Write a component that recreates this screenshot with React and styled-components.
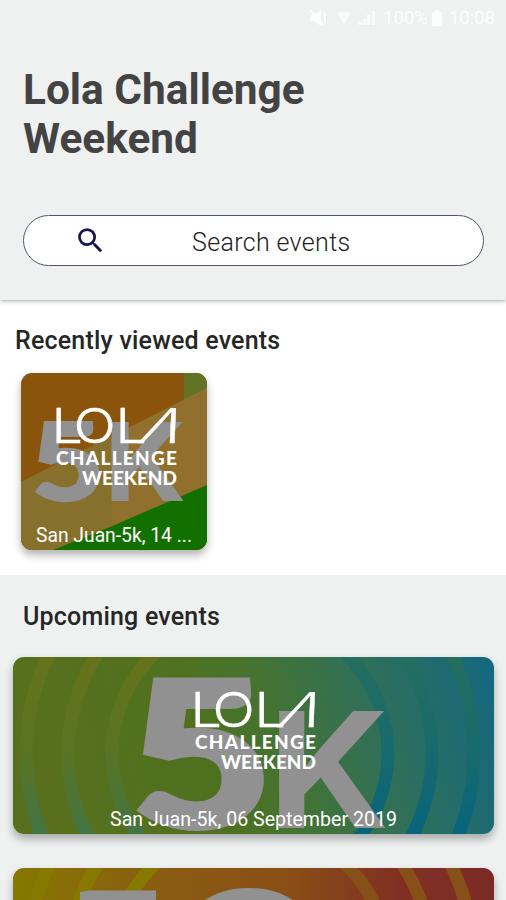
import styled, { createGlobalStyle } from "styled-components";

const GlobalStyle = createGlobalStyle`
  * {
    box-sizing: border-box;
  }

  body {
    margin: 0;
    background-color: #eff1f1;
    font-family: Roboto, "Liberation Sans", sans-serif;
  }
`;

const Screen = styled.main`
  display: flex;
  flex-direction: column;
  height: 900px;
  overflow: hidden;
`;

const Header = styled.header`
  flex: none;
  height: 300px;
  background-color: #eff1f1;
  box-shadow: 0 1px 4px rgba(0, 0, 0, 0.35);
  z-index: 1;
`;

const StatusBar = styled.div`
  display: flex;
  align-items: center;
  justify-content: flex-end;
  height: 36px;
  padding-right: 11px;
  color: #fdfdfd;
  font-size: 18.5px;
`;

const StatusIcon = styled.svg`
  width: ${(props) => props.$w}px;
  height: 18px;
  margin-right: ${(props) => props.$gap}px;
  fill: #fdfdfd;
`;

const Percent = styled.span`
  margin-right: 3px;
`;

const Title = styled.h1`
  margin: 29px 23px 0;
  width: 340px;
  color: #434343;
  font-size: 42.4px;
  font-weight: 700;
  line-height: 49px;
`;

const SearchBox = styled.button`
  display: flex;
  align-items: center;
  width: 461px;
  height: 51px;
  margin: 52px 0 0 23px;
  padding: 0 0 0 50px;
  border: 1px solid #55556a;
  border-radius: 26px;
  background-color: #fff;
  color: #222;
  font-family: inherit;
  font-size: 25px;
`;

const SearchIcon = styled.svg`
  width: 33px;
  height: 33px;
  fill: #17134d;
`;

const SearchLabel = styled.span`
  margin: 4px 0 0 85px;
  font-weight: 300;
  letter-spacing: 0.35px;
`;

const Recent = styled.section`
  flex: none;
  height: 275px;
  padding: 26px 0 0 15px;
  background-color: #fff;
`;

const Upcoming = styled.section`
  padding: 27px 12px 0 13px;
`;

const Heading = styled.h2`
  margin: 0 0 0 ${(props) => props.$indent || 0}px;
  color: #262626;
  font-size: 25px;
  font-weight: 500;
  letter-spacing: 0.2px;
  line-height: 30px;
`;

const Card = styled.article`
  display: grid;
  width: ${(props) => props.$w}px;
  height: 177px;
  margin: ${(props) => props.$margin};
  border-radius: 11px;
  overflow: hidden;
  box-shadow: 0 5px 8px rgba(0, 0, 0, 0.3);

  > * {
    grid-area: 1 / 1;
  }
`;

const Art = styled.svg`
  display: block;
  width: 100%;
  height: 177px;
`;

const Caption = styled.p`
  align-self: end;
  margin: 0 0 2px;
  color: #fff;
  font-size: ${(props) => props.$size || 19.6}px;
  line-height: 24px;
  text-align: center;
  white-space: nowrap;
`;

const Big = styled.text`
  fill: #919191;
  font-family: Inter, sans-serif;
  font-weight: ${(props) => props.$weight || 700};
`;

const Five = styled.text`
  fill: #919191;
  stroke: #919191;
  font-family: Lato, sans-serif;
  font-weight: 900;
`;

const Thin = styled.text`
  fill: #fff;
  stroke: #fff;
  stroke-width: 0.4px;
  font-family: Inter, sans-serif;
  font-size: 48px;
  font-weight: 300;
`;

const Bold = styled.text`
  fill: #fff;
  font-family: Lato, sans-serif;
  font-size: 19px;
  font-weight: 900;
`;

const Logo = ({ x, y }) => (
  <g transform={`translate(${x} ${y})`}>
    <Thin transform="translate(-4.6 35) scale(1.16 1)">L</Thin>
    <Thin transform="translate(17.5 35) scale(1.16 1)">O</Thin>
    <Thin transform="translate(59.4 35) scale(1.16 1)">L</Thin>
    <Thin transform="translate(80.5 35) scale(1.22 1) skewX(-22)">Λ</Thin>
    <Bold x="0" y="57" textLength="121">CHALLENGE</Bold>
    <Bold x="26" y="77" textLength="95">WEEKEND</Bold>
  </g>
);

const Rings = ({ left, right }) => (
  <g fill="none" strokeWidth="13">
    {[138, 182, 224].map((r) => (
      <g key={r}>
        <path d={`M237 ${96 - r}A${r} ${r} 0 0 0 237 ${96 + r}`} stroke={left} />
        <path d={`M237 ${96 - r}A${r} ${r} 0 0 1 237 ${96 + r}`} stroke={right} />
      </g>
    ))}
  </g>
);

const RecentArt = () => (
  <Art viewBox="0 0 186 177">
    <path d="M0 0H186V177H0Z" fill="#8b540d" />
    <path d="M163 0H186V40H163Z" fill="#627326" />
    <path d="M0 109L186 15V177H0Z" fill="#90702c" />
    <path d="M0 109L91 63V177H0Z" fill="#86702c" />
    <path d="M32 177L89 154L186 112V177Z" fill="#127000" />
    <Five fontSize="107" strokeWidth="3" transform="translate(12 127) scale(1.17 1) skewX(3)">5</Five>
    <Big fontSize="109" transform="translate(83 128) scale(1.05 1)">K</Big>
    <Logo x={35} y={35} />
  </Art>
);

const GreenArt = () => (
  <Art viewBox="0 0 481 177">
    <defs>
      <linearGradient id="green" x2="1" y2="-0.1">
        <stop offset="0" stopColor="#58701e" />
        <stop offset="0.35" stopColor="#4e711f" />
        <stop offset="0.5" stopColor="#447332" />
        <stop offset="0.7" stopColor="#317057" />
        <stop offset="1" stopColor="#136782" />
      </linearGradient>
      <linearGradient id="ringLeft" gradientUnits="userSpaceOnUse" x1="0" y1="0" x2="0" y2="177">
        <stop offset="0" stopColor="#66731b" />
        <stop offset="0.55" stopColor="#587423" />
        <stop offset="1" stopColor="#427445" />
      </linearGradient>
      <linearGradient id="ringRight" gradientUnits="userSpaceOnUse" x1="0" y1="0" x2="0" y2="177">
        <stop offset="0" stopColor="#256e5f" />
        <stop offset="0.5" stopColor="#186a6c" />
        <stop offset="1" stopColor="#08647c" />
      </linearGradient>
    </defs>
    <path d="M0 0H481V177H0Z" fill="url(#green)" />
    <Rings left="url(#ringLeft)" right="url(#ringRight)" />
    <Five fontSize="200" strokeWidth="7" transform="translate(121 169) scale(1.22 1) skewX(3.5)">5</Five>
    <Big fontSize="161" transform="translate(255 171) scale(1.05 1)">K</Big>
    <Logo x={182} y={35} />
  </Art>
);

const RedArt = () => (
  <Art viewBox="0 0 481 177">
    <defs>
      <linearGradient id="red">
        <stop offset="0" stopColor="#857800" />
        <stop offset="0.3" stopColor="#8a5c12" />
        <stop offset="0.58" stopColor="#894e16" />
        <stop offset="0.8" stopColor="#803022" />
        <stop offset="1" stopColor="#7b2b25" />
      </linearGradient>
      <clipPath id="one">
        <rect x="67" y="0" width="76" height="177" />
      </clipPath>
    </defs>
    <path d="M0 0H481V177H0Z" fill="url(#red)" />
    <Rings left="#877900" right="#875018" />
    <g clipPath="url(#one)">
      <Big fontSize="207" transform="translate(-74 173) scale(3.5 1)" $weight={900}>1</Big>
    </g>
    <Big fontSize="207" transform="translate(155 173) scale(1.1 1)" $weight={900}>0</Big>
  </Art>
);

const App = () => (
  <>
    <GlobalStyle />
    <Screen>
      <Header>
        <StatusBar>
          <StatusIcon viewBox="0 0 20 18" $w={20} $gap={7}>
            <path d="M1 6H5L12 1V17L5 12H1Z" />
            <path d="M1 1L14 16M16 3V14" stroke="#fdfdfd" strokeWidth="2" />
          </StatusIcon>
          <StatusIcon viewBox="0 0 16 18" $w={16} $gap={6}>
            <path d="M1 5Q8 0 15 5L8 15Z" opacity="0.65" />
          </StatusIcon>
          <StatusIcon viewBox="0 0 18 18" $w={18} $gap={7}>
            <path d="M1 13H4V16H1ZM5 10H8V16H5ZM9 6H12V16H9ZM14 2H17V16H14Z" />
          </StatusIcon>
          <Percent>100%</Percent>
          <StatusIcon viewBox="0 0 12 18" $w={12} $gap={6}>
            <path d="M4 1H8V3H11V17H1V3H4Z" />
          </StatusIcon>
          <span>10:08</span>
        </StatusBar>
        <Title>Lola Challenge Weekend</Title>
        <SearchBox>
          <SearchIcon viewBox="0 0 24 24">
            <path d="M15.5 14h-.79l-.28-.27A6.47 6.47 0 0 0 16 9.5 6.5 6.5 0 1 0 9.5 16c1.61 0 3.09-.59 4.23-1.57l.27.28v.79l5 4.99L20.49 19zm-6 0C7.01 14 5 11.99 5 9.5S7.01 5 9.5 5 14 7.01 14 9.5 11.99 14 9.5 14" />
          </SearchIcon>
          <SearchLabel>Search events</SearchLabel>
        </SearchBox>
      </Header>
      <Recent>
        <Heading>Recently viewed events</Heading>
        <Card $w={186} $margin="17px 0 0 6px">
          <RecentArt />
          <Caption $size={19.3}>San Juan-5k, 14 ...</Caption>
        </Card>
      </Recent>
      <Upcoming>
        <Heading $indent={10}>Upcoming events</Heading>
        <Card $w={481} $margin="25px 0 34px">
          <GreenArt />
          <Caption>San Juan-5k, 06 September 2019</Caption>
        </Card>
        <Card $w={481} $margin="0">
          <RedArt />
        </Card>
      </Upcoming>
    </Screen>
  </>
);

export default App;
